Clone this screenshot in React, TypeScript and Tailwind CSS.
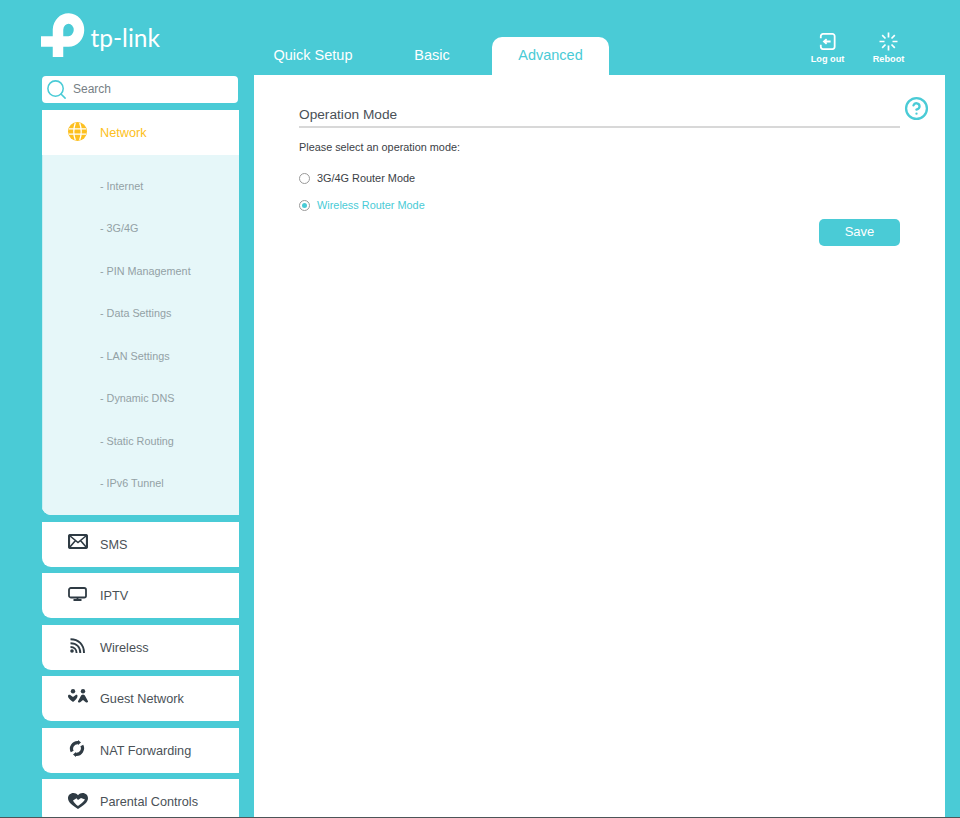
import { CircleHelp, Search } from "lucide-react";

const subItems = [
  "Internet",
  "3G/4G",
  "PIN Management",
  "Data Settings",
  "LAN Settings",
  "Dynamic DNS",
  "Static Routing",
  "IPv6 Tunnel",
];

function Logo() {
  return (
    <div className="flex items-end h-[75px] w-[213px] pb-[17px]">
      <svg width="46" height="46" viewBox="41 13 46 46" fill="none" className="shrink-0">
        <path d="M58 58V30.5A10.500 11.500 0 1 1 68.500 42.500H41" stroke="#fff" strokeWidth="10.500" />
      </svg>
      <span className="ml-[3.500px] mb-[5px] text-[24.500px] leading-[30px] text-white font-['Lato',sans-serif] font-normal">
        tp-link
      </span>
    </div>
  );
}

function LogoutIcon() {
  return (
    <svg width="17" height="17" viewBox="0 0 18 19" fill="none" stroke="#fff" strokeWidth="2">
      <path d="M1.5 6V3.5A2.5 2.5 0 0 1 4 1H14.5A2.5 2.5 0 0 1 17 3.500V15.500A2.500 2.500 0 0 1 14.500 18H4A2.500 2.500 0 0 1 1.500 15.500V13" />
      <path d="M5 9.500H12.500M8 6.800 5 9.500 8 12.200" strokeWidth="2" />
    </svg>
  );
}

function RebootIcon() {
  return (
    <svg width="19" height="19" viewBox="0 0 19 19" fill="none" stroke="#fff" strokeWidth="1.7">
      <path d="M9.500 0.500V5.500M9.500 13.500V18.500M0.500 9.500H5.500M13.500 9.500H18.500M3.200 3.200 6.500 6.500M12.500 12.500 15.800 15.800M15.800 3.200 12.500 6.500M6.500 12.500 3.200 15.800" />
    </svg>
  );
}

function GlobeIcon() {
  return (
    <svg width="19" height="19" viewBox="0 0 19 19" fill="none">
      <circle cx="9.500" cy="9.500" r="9.500" fill="#fdc020" />
      <path d="M1 6.800H18M1 12.200H18M7.300 1C5.500 6 5.500 13 7.300 18M11.700 1C13.500 6 13.500 13 11.700 18" stroke="#fff" strokeWidth="1.300" />
    </svg>
  );
}

function SmsIcon() {
  return (
    <svg width="20" height="15" viewBox="0 0 20 15" fill="none" stroke="#2f3b44" strokeWidth="2.200">
      <rect x="1" y="1" width="18" height="13" rx="1.500" />
      <path d="M1.500 1.500 10 8.500 18.500 1.500M1.500 13.500 7.500 6.500M18.500 13.500 12.500 6.500" strokeWidth="1.600" />
    </svg>
  );
}

function MonitorIcon() {
  return (
    <svg width="19" height="14" viewBox="0 0 19 14" fill="none" stroke="#2f3b44" strokeWidth="1.800">
      <rect x="1" y="1" width="17" height="9.500" rx="1.800" />
      <path d="M9.500 10.500V13M5.500 13H13.500" />
    </svg>
  );
}

function WirelessIcon() {
  return (
    <svg width="15" height="15" viewBox="0 0 15 15" fill="none" stroke="#2f3b44" strokeWidth="1.900">
      <path d="M0.500 1.200C8.500 1.200 14 6.500 14 15" />
      <path d="M0.500 5.200C6.500 5.200 10.300 9 10.300 15" />
      <path d="M0.500 9C4 9 6.600 11.300 6.600 15" />
      <circle cx="2" cy="13" r="1.800" fill="#2f3b44" stroke="none" />
    </svg>
  );
}

function GuestIcon() {
  return (
    <svg width="20" height="14" viewBox="0 0 20 14" fill="#2f3b44">
      <circle cx="5" cy="2.300" r="2.200" />
      <circle cx="15" cy="2.300" r="2.200" />
      <path d="M0 7.300C0 5.800 1.500 5.500 2.600 6.300L5 8 7.400 6.300C8.500 5.500 9.500 5.800 9.500 7.300 9.500 9 7 11.500 5 13 3 11.500 0 9 0 7.300Z" />
      <path d="M15 5.500C16 5.500 16.800 6.300 17.300 7.300L20 12.200C20.300 13.500 18.800 14 17.800 13.200L15 11 12.200 13.200C11.200 14 9.700 13.500 10 12.200L12.700 7.300C13.200 6.300 14 5.500 15 5.500Z" />
    </svg>
  );
}

function NatIcon() {
  return (
    <svg width="16" height="17" viewBox="0 0 16 17" fill="none" stroke="#2f3b44" strokeWidth="3.200">
      <path d="M9 2.600A6.100 6.100 0 0 0 3.200 11.500" />
      <path d="M7 14.400A6.100 6.100 0 0 0 12.800 5.500" />
      <path d="M9 0 12 2.500 9 5ZM7 12 4 14.500 7 17Z" fill="#2f3b44" strokeWidth="0" />
    </svg>
  );
}

function HeartIcon() {
  return (
    <svg width="20" height="16" viewBox="0 0 20 16" fill="#2f3b44">
      <path d="M5.500 0C7.300 0 8.800.8 10 2.200 11.200.8 12.700 0 14.500 0 17.800 0 20 2.400 20 5.300 20 9.500 15 13 10 16 5 13 0 9.500 0 5.300 0 2.400 2.200 0 5.500 0Z" />
      <path d="M5 7.500 8.500 5.200 10 7 13 5 17 6.500C15.500 9 12.500 11.300 10 13 7.500 11.300 6 9.500 5 7.500Z" fill="#fff" />
    </svg>
  );
}

function NavItem({ icon, label, iconClass }: { icon: React.ReactNode; label: string; iconClass: string }) {
  return (
    <div className="h-[45px] mb-[6.400px] shrink-0 bg-white rounded-bl-[9px] flex">
      <div className={`w-[58px] flex ${iconClass}`}>{icon}</div>
      <span className="pt-[15px] text-[12.700px] leading-[16px] text-[#4a5157]">{label}</span>
    </div>
  );
}

export default function App() {
  return (
    <div className="w-[960px] h-[818px] overflow-hidden bg-[#4acbd6] border-b border-[#4d5558] font-['Liberation_Sans',Arial,sans-serif]">
      {/* header */}
      <header className="h-[75px] flex pl-[41px]">
        <Logo />
        <nav className="flex items-end text-[14.500px] text-white">
          <div className="w-[118px] h-[38px] flex items-center justify-center">Quick Setup</div>
          <div className="w-[120px] h-[38px] flex items-center justify-center">Basic</div>
          <div className="w-[117px] h-[38px] flex items-center justify-center bg-white text-[#4acbd6] rounded-t-[10px]">
            Advanced
          </div>
        </nav>
        <div className="ml-auto mr-[55px] pt-[33px] flex gap-[28px] text-[9.200px] font-bold text-white">
          <div className="w-[33px] flex flex-col items-center gap-[2px]">
            <LogoutIcon />
            <span className="leading-[12px] whitespace-nowrap mt-px">Log out</span>
          </div>
          <div className="w-[33px] flex flex-col items-center gap-[2px] -mt-px">
            <RebootIcon />
            <span className="leading-[12px]">Reboot</span>
          </div>
        </div>
      </header>

      <div className="flex h-[743px] pl-[42px]">
        {/* sidebar */}
        <aside className="w-[197px] mr-[15px] flex flex-col overflow-hidden">
          <div className="mt-px h-[27px] w-[196px] shrink-0 bg-white rounded-[4px] flex items-center pl-[3px]">
            <Search size={23} strokeWidth={1.600} className="text-[#4acbd6]" />
            <span className="ml-[5px] mb-[2px] text-[12px] text-[#777f85]">Search</span>
          </div>
          <div className="mt-[7px] mb-[7px] shrink-0 rounded-bl-[9px] overflow-hidden bg-white">
            <div className="h-[45px] flex">
              <div className="w-[58px] flex pl-[26px] pt-[12px]">
                <GlobeIcon />
              </div>
              <span className="pt-[15px] text-[12.700px] leading-[16px] text-[#fdc020]">Network</span>
            </div>
            <ul className="h-[360px] pt-[9.500px] bg-[#e6f7f9] border-l border-[#c9f0f3] pl-[57px]">
              {subItems.map((item) => (
                <li key={item} className="h-[42.500px] flex items-center text-[10.800px] text-[#93a1a5]">
                  - {item}
                </li>
              ))}
            </ul>
          </div>
          <NavItem icon={<SmsIcon />} label="SMS" iconClass="pl-[26px] pt-[12px]" />
          <NavItem icon={<MonitorIcon />} label="IPTV" iconClass="pl-[26px] pt-[14px]" />
          <NavItem icon={<WirelessIcon />} label="Wireless" iconClass="pl-[28px] pt-[13px]" />
          <NavItem icon={<GuestIcon />} label="Guest Network" iconClass="pl-[26px] pt-[13px]" />
          <NavItem icon={<NatIcon />} label="NAT Forwarding" iconClass="pl-[27px] pt-[12px]" />
          <NavItem icon={<HeartIcon />} label="Parental Controls" iconClass="pl-[26px] pt-[14px]" />
        </aside>

        {/* main panel */}
        <main className="relative w-[691px] bg-white pl-[45px] pr-[45px] pt-[30px]">
          <CircleHelp size={25} strokeWidth={2.200} className="absolute right-[16px] top-[21px] text-[#4acbd6]" />
          <h1 className="h-[23px] text-[13.700px] leading-[20px] font-normal text-[#4a5157] border-b-2 border-[#d8d8d8]">
            Operation Mode
          </h1>
          <p className="mt-[12px] text-[10.850px] leading-[14px] text-[#3b4146]">Please select an operation mode:</p>
          <label className="mt-[17.500px] flex items-center h-[14px] text-[10.900px] text-[#3b4146]">
            <span className="w-[11px] h-[11px] rounded-full border border-[#9a9a9a] bg-white" />
            <span className="ml-[7px]">3G/4G Router Mode</span>
          </label>
          <label className="mt-[13px] flex items-center h-[14px] text-[10.900px] text-[#4acbd6]">
            <span className="w-[11px] h-[11px] rounded-full border border-[#9a9a9a] bg-white flex items-center justify-center">
              <span className="w-[5px] h-[5px] rounded-full bg-[#4acbd6]" />
            </span>
            <span className="ml-[7px]">Wireless Router Mode</span>
          </label>
          <div className="mt-[6.500px] flex justify-end">
            <button className="w-[81px] h-[27px] pb-[2px] rounded-[5px] bg-[#4acbd6] text-white text-[13px]">Save</button>
          </div>
        </main>
      </div>
    </div>
  );
}
